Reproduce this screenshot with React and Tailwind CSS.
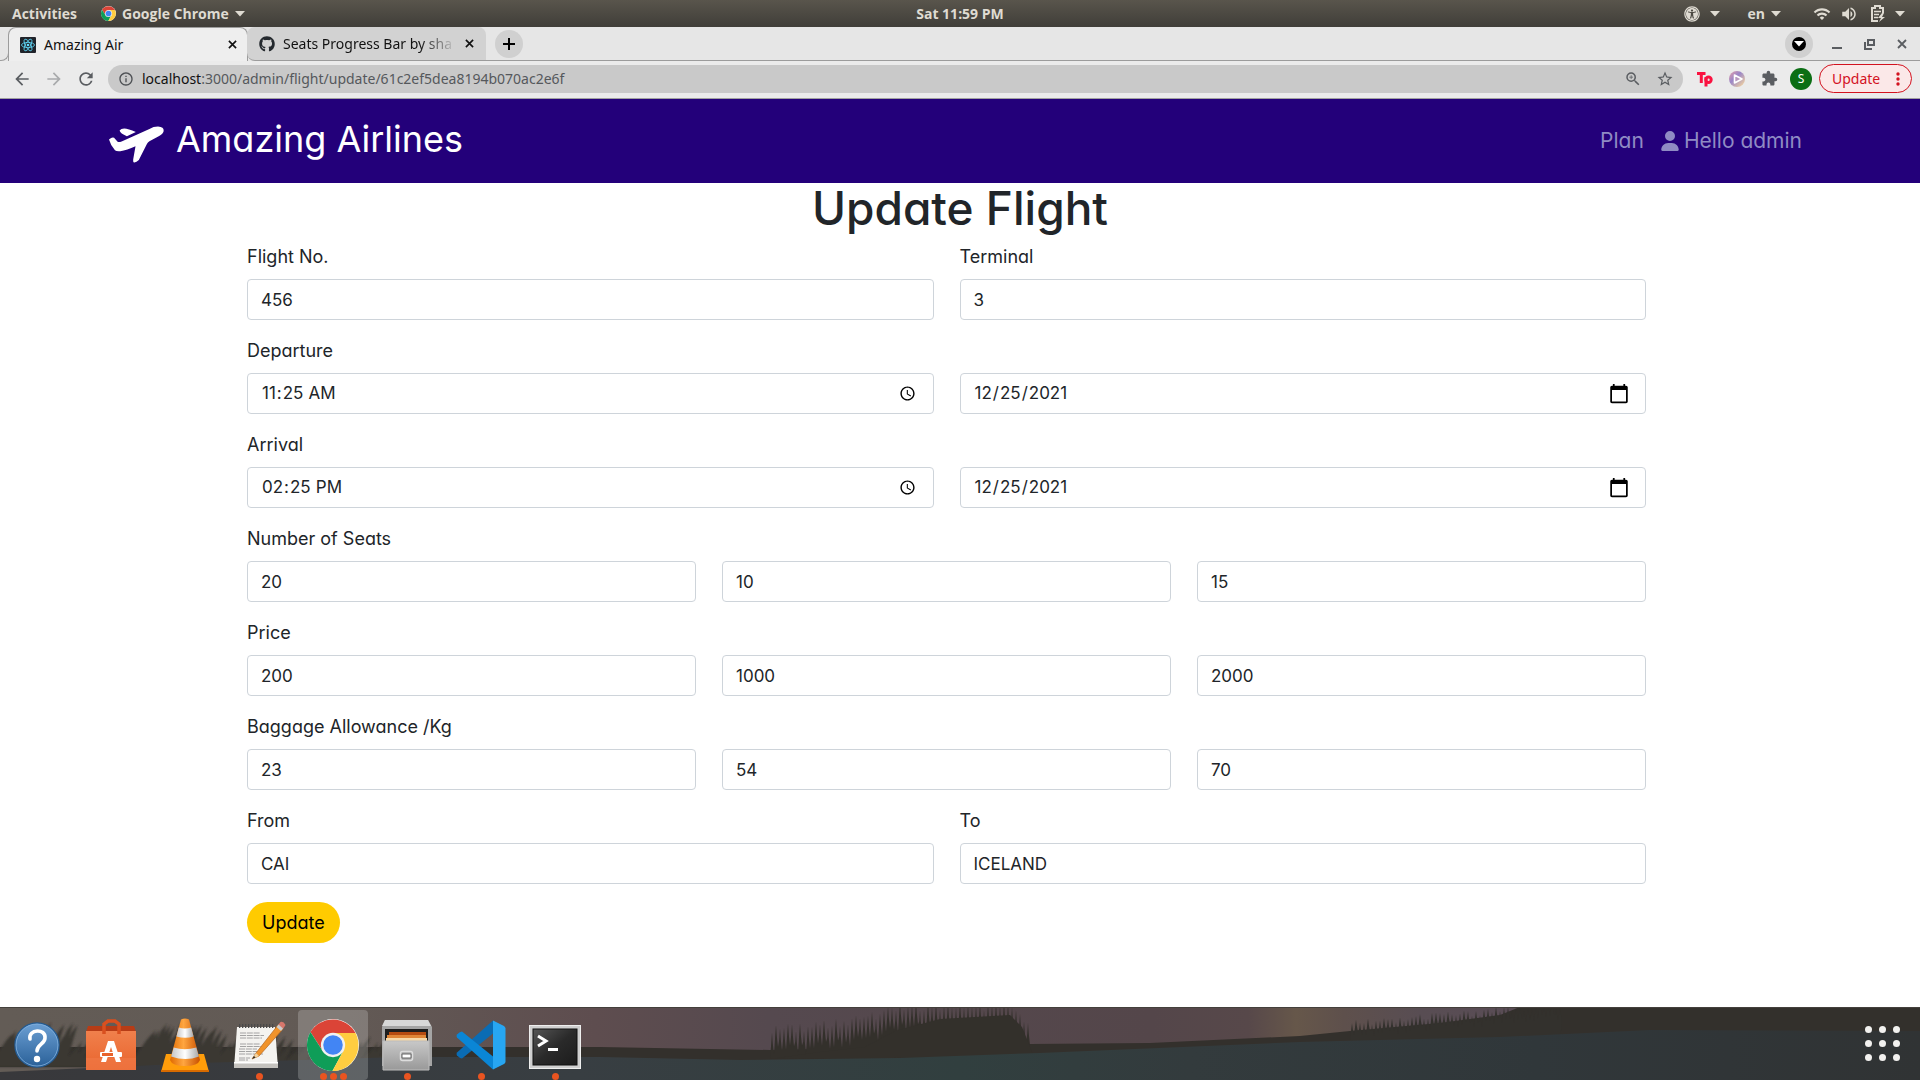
import React from "react";
import { FaGithub, FaUniversalAccess } from "react-icons/fa";
import { FaUser } from "react-icons/fa6";
import { MdArrowBack, MdArrowForward, MdRefresh, MdInfoOutline, MdZoomIn, MdStarBorder, MdWifi, MdVolumeUp, MdExtension } from "react-icons/md";

const Caret = ({ className = "" }) => (
  <svg viewBox="0 0 10 6" className={"h-[6px] w-[10px] " + className} fill="currentColor" aria-hidden="true">
    <path d="M0 0h10L5 5.5z" />
  </svg>
);

const Cross = ({ className }) => (
  <svg viewBox="0 0 10 10" className={className} stroke="currentColor" strokeWidth="1.800" aria-hidden="true">
    <path d="M1 1l8 8M9 1l-8 8" />
  </svg>
);

const ChromeLogo = ({ className }) => (
  <svg viewBox="0 0 48 48" className={className} aria-hidden="true">
    <circle cx="24" cy="24" r="24" fill="#fff" />
    <path fill="#db4437" d="M24 24V13H44.8A24 24 0 0 0 3.2 12L14.5 29.5z" />
    <path fill="#0f9d58" d="M3.2 12A24 24 0 0 0 23.5 48L33.5 29.5 24 24 14.5 29.5z" />
    <path fill="#ffcd40" d="M44.8 13A24 24 0 0 1 23.5 48L33.5 29.5 24 13z" />
    <circle cx="24" cy="24" r="11.2" fill="#f1f1f1" />
    <circle cx="24" cy="24" r="9" fill="#4285f4" />
  </svg>
);

const ReactLogo = () => (
  <svg viewBox="0 0 16 16" className="size-4" aria-hidden="true">
    <rect width="16" height="16" rx="1" fill="#20232a" />
    <g fill="none" stroke="#61dafb" strokeWidth="0.8">
      <ellipse cx="8" cy="8" rx="6.5" ry="2.6" />
      <ellipse cx="8" cy="8" rx="6.5" ry="2.6" transform="rotate(60 8 8)" />
      <ellipse cx="8" cy="8" rx="6.5" ry="2.6" transform="rotate(120 8 8)" />
    </g>
    <circle cx="8" cy="8" r="1.3" fill="#61dafb" />
  </svg>
);

const BatteryIcon = () => (
  <svg viewBox="0 0 16 18" className="h-[18px] w-4" fill="none" stroke="currentColor" strokeWidth="2" aria-hidden="true">
    <path d="M13 8V3H10V1H5v2H2v13h6" />
    <path d="M4 6.500h7M4 9.500h5M4 12.500h4" strokeWidth="1.500" />
    <path d="M12 8l-4 5h3l-2 4 6-5h-3l2-4z" fill="currentColor" stroke="none" />
  </svg>
);

const PlaneLogo = () => (
  <svg viewBox="26 32 166 110" className="mt-[6px] h-[37px] w-[55px]" fill="currentColor" aria-hidden="true">
    <path d="M30 69Q40 63 44 70L52 79Q56 81 64 78L148 40Q160 33 174 33Q192 34 191 46Q190 54 176 62L148 77Q143 80 140 86L116 134Q108 142 101 141Q98 139 99 132L106 92Q80 104 60 107Q48 108 44 104Q30 88 26 72Z" />
    <path d="M58 45Q62 39 72 39Q84 40 107 49L80 62Q60 54 58 45Z" />
  </svg>
);

function SystemBar() {
  return (
    <div className="grid h-[27px] shrink-0 grid-cols-3 items-center bg-linear-to-b from-[#59554c] to-[#403e39] font-['Open_Sans',sans-serif] text-[14px] font-bold text-[#dfdbd2]">
      <div className="flex items-center pl-3">
        <button className="w-[89px] text-left">Activities</button>
        <button className="flex items-center gap-[6px]">
          <ChromeLogo className="size-[15px]" />
          <span>Google Chrome</span>
          <Caret />
        </button>
      </div>
      <button className="justify-self-center">Sat 11:59 PM</button>
      <div className="flex items-center justify-end pr-[15px]">
        <button className="flex items-center gap-[10px]" aria-label="Accessibility"><FaUniversalAccess className="size-4" /><Caret /></button>
        <button className="ml-[28px] flex items-center gap-[6px]">en<Caret /></button>
        <button className="ml-[32px] flex items-center" aria-label="System menu">
          <MdWifi className="size-[18px]" />
          <MdVolumeUp className="ml-[9px] size-[18px]" />
          <span className="ml-[12px]"><BatteryIcon /></span>
          <Caret className="ml-[9px]" />
        </button>
      </div>
    </div>
  );
}

function TabStrip() {
  return (
    <div className="flex h-[34px] shrink-0 bg-[#e6e6e6] text-[14px] text-[#111]">
      <div className="-mr-px flex w-[9px] items-end"><div className="h-3 w-full rounded-br-lg border-r border-b border-[#9c9c9c]" /></div>
      <div className="flex w-[240px] items-center rounded-t-lg border border-b-0 border-[#9c9c9c] bg-[#eeeeee] pr-[10px] pl-[11px]">
        <ReactLogo />
        <span className="ml-2 flex-1 pb-px">Amazing Air</span>
        <button aria-label="Close tab"><Cross className="size-[9px]" /></button>
      </div>
      <div className="-ml-px flex w-[239px] items-center rounded-tl-lg rounded-tr-lg rounded-bl-lg border-b border-[#9c9c9c] bg-[#d2d2d2] pr-[12px] pl-[12px]">
        <FaGithub className="size-4 shrink-0 text-[#24292e]" />
        <span className="ml-2 bg-linear-to-r from-[#111] from-80% to-[#bbb] bg-clip-text pb-px whitespace-nowrap text-transparent">Seats Progress Bar by sha</span>
        <button className="ml-auto" aria-label="Close tab"><Cross className="size-[9px]" /></button>
      </div>
      <div className="flex flex-1 items-center justify-between border-b border-[#9c9c9c] pr-[11px] pl-[9px]">
        <button className="flex size-7 items-center justify-center rounded-full bg-[#d0d0d0]" aria-label="New tab">
          <svg viewBox="0 0 12 12" className="size-3" stroke="#000" strokeWidth="2" aria-hidden="true"><path d="M6 0v12M0 6h12" /></svg>
        </button>
        <div className="flex items-center text-[#5a5d61]">
          <button className="mr-[16px] flex size-7 items-center justify-center rounded-full bg-[#d0d0d0]" aria-label="Search tabs">
            <span className="flex size-[14px] items-center justify-center rounded-full bg-black"><Caret className="h-1 w-[6px] text-white" /></span>
          </button>
          <button className="flex h-4 w-4 items-end pb-[3px]" aria-label="Minimize"><span className="mx-auto h-[2px] w-[10px] bg-current" /></button>
          <button className="ml-4" aria-label="Restore">
            <svg viewBox="0 0 16 16" className="size-4" fill="none" stroke="currentColor" strokeWidth="2" aria-hidden="true"><path d="M7 4h6v5H7zM4 6v7h7" /></svg>
          </button>
          <button className="mr-[2px] ml-5" aria-label="Close"><Cross className="size-[10px]" /></button>
        </div>
      </div>
    </div>
  );
}

const slot = "flex w-8 shrink-0 items-center justify-center text-[#5a5d61]";

function AddressBar() {
  return (
    <div className="flex h-[38px] shrink-0 items-center border-b border-[#a0a0a0] bg-[#ebebeb] pr-2 pl-[6px] pb-[2px] text-[14px]">
      <button className={slot} aria-label="Back"><MdArrowBack className="size-5" /></button>
      <button className={slot + " opacity-45"} aria-label="Forward"><MdArrowForward className="size-5" /></button>
      <button className={slot} aria-label="Reload"><MdRefresh className="size-5" /></button>
      <div className="ml-[6px] flex h-7 flex-1 items-center rounded-full bg-[#c9c9c9] pl-[10px]">
        <MdInfoOutline className="size-4 text-[#4d5054]" />
        <div className="ml-2 flex-1 text-[#55585c]"><span className="text-[#111]">localhost</span>:3000/admin/flight/update/61c2ef5dea8194b070ac2e6f</div>
        <button className={slot} aria-label="Zoom"><MdZoomIn className="size-[18px]" /></button>
        <button className={slot} aria-label="Bookmark"><MdStarBorder className="size-[18px]" /></button>
        <span className="w-[2px]" />
      </div>
      <button className={slot + " ml-[6px]"} aria-label="Extension">
        <svg viewBox="0 0 16 16" className="size-4" fill="none" stroke="#fa1240" strokeWidth="3" aria-hidden="true"><path d="M0 2.500h8.500M4.300 2v10M9 15.500V6" /><circle cx="11.500" cy="8.800" r="2.700" /></svg>
      </button>
      <button className={slot} aria-label="Media extension">
        <svg viewBox="0 0 16 16" className="size-4" aria-hidden="true">
          <defs><linearGradient id="media" x1="0" y1="0" x2="1" y2="1"><stop stopColor="#e8a0a8" /><stop offset=".4" stopColor="#9a86c8" /><stop offset="1" stopColor="#ffdf9a" /></linearGradient></defs>
          <circle cx="8" cy="8" r="8" fill="url(#media)" /><path d="M5.500 4v8L13 8z" fill="#b89ac0" stroke="#fff" strokeWidth="1.600" strokeLinejoin="round" />
        </svg>
      </button>
      <button className={slot} aria-label="Extensions"><MdExtension className="size-[17px]" /></button>
      <button className={slot} aria-label="Profile"><span className="flex size-[22px] items-center justify-center rounded-full bg-[#0b6e14] text-[12px] text-white">S</span></button>
      <button className="ml-[2px] flex h-[29px] w-[93px] items-center justify-between rounded-full border border-[#d3121f] bg-[#fbe8e8] pr-[11px] pl-[12px] text-[#d3121f]">
        Update
        <svg viewBox="0 0 4 14" className="h-[14px] w-1" fill="currentColor" aria-hidden="true"><circle cx="2" cy="2" r="1.700" /><circle cx="2" cy="7" r="1.700" /><circle cx="2" cy="12" r="1.700" /></svg>
      </button>
    </div>
  );
}

const siteFont = "font-['Inter',sans-serif] [font-feature-settings:'cv11']";

function Header() {
  return (
    <header className={"flex h-[84px] shrink-0 items-center justify-between bg-[#23007a] pr-[118px] pl-[109px] " + siteFont}>
      <a href="#home" className="flex items-center gap-3 text-[36px] leading-[44px] text-white">
        <PlaneLogo />
        <span className="pb-1">Amazing Airlines</span>
      </a>
      <nav className="flex items-center gap-[17px] text-[21px] text-[#8f8bc4]">
        <a href="#plan">Plan</a>
        <a href="#profile" className="flex items-center gap-[5px]"><FaUser className="h-5 w-[18px]" />Hello admin</a>
      </nav>
    </header>
  );
}

const inputClass =
  "block h-[41px] w-full min-w-0 rounded-[4px] border border-[#ced4da] bg-white px-[13px] text-[17px] text-[#212529] [&[type=date]::-webkit-calendar-picker-indicator]:size-[22px]";

const rows = [
  [{ id: "flight", label: "Flight No.", value: "456" }, { id: "terminal", label: "Terminal", value: "3" }],
  [{ id: "departure-time", label: "Departure", value: "11:25", type: "time" }, { id: "departure-date", name: "Departure date", value: "2021-12-25", type: "date" }],
  [{ id: "arrival-time", label: "Arrival", value: "14:25", type: "time" }, { id: "arrival-date", name: "Arrival date", value: "2021-12-25", type: "date" }],
  [{ id: "seats-1", label: "Number of Seats", value: "20" }, { id: "seats-2", name: "Seats, second class", value: "10" }, { id: "seats-3", name: "Seats, third class", value: "15" }],
  [{ id: "price-1", label: "Price", value: "200" }, { id: "price-2", name: "Price, second class", value: "1000" }, { id: "price-3", name: "Price, third class", value: "2000" }],
  [{ id: "bag-1", label: "Baggage Allowance /Kg", value: "23" }, { id: "bag-2", name: "Baggage, second class", value: "54" }, { id: "bag-3", name: "Baggage, third class", value: "70" }],
  [{ id: "from", label: "From", value: "CAI" }, { id: "to", label: "To", value: "ICELAND" }],
];

function FlightForm() {
  return (
    <main className={"min-h-0 flex-1 overflow-hidden bg-white text-[18px] text-[#212529] " + siteFont}>
      <h1 className="text-center text-[46px] leading-[50px] font-medium">Update Flight</h1>
      <form className="mx-auto max-w-[1452px] pt-[11px] pr-[40px] pl-[13px]">
        {rows.map((fields) => (
          <div key={fields[0].id} className={"mb-[18px] grid items-end gap-x-[26px] " + (fields.length === 2 ? "grid-cols-2" : "grid-cols-3")}>
            {fields.map((f) => (
              <div key={f.id}>
                {f.label && <label htmlFor={f.id} className="mb-[9px] block leading-[26px]">{f.label}</label>}
                <input id={f.id} type={f.type || "text"} aria-label={f.name} defaultValue={f.value} className={inputClass} />
              </div>
            ))}
          </div>
        ))}
        <button type="button" className="h-[41px] rounded-full bg-[#ffcb00] px-[15px] text-black">Update</button>
      </form>
    </main>
  );
}

const noise = (n) => {
  const v = Math.sin(n * 12.9898) * 43758.5453;
  return v - Math.floor(v);
};

const spikes = (from, to, step, depth, jitter, top, base) => {
  let d = `M${from} ${base}`;
  for (let x = from; x < to; x += step) {
    const y = top(x) + noise(x) * jitter;
    d += `L${x + step * 0.3} ${y + depth * 0.5}L${x + step / 2} ${y}L${x + step * 0.7} ${y + depth * 0.5}L${x + step} ${y + depth}`;
  }
  return d + `L${to} ${base}Z`;
};

const blades = (from, to, count, top, base) => {
  let d = "";
  for (let i = 0; i < count; i++) {
    const x = from + ((to - from) * i) / count;
    const y = top(x) + noise(i + 3) * 14;
    d += `M${x - 12} ${base}L${x + 6} ${y + 2}L${x + 12} ${y - 5}L${x + 8} ${y + 8}L${x} ${base}Z`;
  }
  return d;
};

const forestEdge = (x) => (x < 850 ? 18 - (x - 770) * 0.1 : x < 885 ? 8 - (x - 850) * 0.2 : x < 1010 ? -5 : (x - 1010) * 0.8 - 2);
const forest = spikes(770, 1030, 4, 22, 9, forestEdge, 52);
const forestMass = "M770 52 820 45 865 40 895 24 940 12 1010 8 1022 20 1030 40 1034 50Z";
const hill = spikes(1350, 1560, 4, 12, 7, (x) => 13 - (x - 1350) * 0.09, 34);
const reeds = blades(0, 70, 16, (x) => 24 - x * 0.15, 60) + blades(140, 185, 12, (x) => 24 - (x - 140) * 0.3, 60) + blades(185, 235, 10, (x) => 16 + (x - 185) * 0.3, 60) + blades(70, 140, 8, () => 32, 60) + blades(235, 420, 24, () => 30, 60);

function Landscape() {
  return (
    <svg viewBox="0 0 1920 73" preserveAspectRatio="none" className="absolute inset-0 h-full w-full" aria-hidden="true">
      <defs>
        <linearGradient id="sky">
          <stop stopColor="#635c56" /><stop offset=".18" stopColor="#625a55" /><stop offset=".31" stopColor="#5e4d4f" /><stop offset=".4" stopColor="#55494f" />
          <stop offset=".6" stopColor="#54464a" /><stop offset=".65" stopColor="#57484a" /><stop offset=".675" stopColor="#66574a" /><stop offset=".7" stopColor="#5e504c" /><stop offset=".74" stopColor="#584d53" /><stop offset=".8" stopColor="#5a4c56" /><stop offset="1" stopColor="#33312d" />
        </linearGradient>
        <linearGradient id="water">
          <stop stopColor="#38383b" /><stop offset=".3" stopColor="#383e42" /><stop offset=".5" stopColor="#313f3f" /><stop offset=".62" stopColor="#333b3d" /><stop offset=".8" stopColor="#30373a" /><stop offset="1" stopColor="#303334" />
        </linearGradient>
        <filter id="soft"><feGaussianBlur stdDeviation="1" /></filter>
      </defs>
      <rect width="1920" height="73" fill="url(#sky)" />
      <path d="M0 40H400L600 40 770 43 1030 37 1150 36 1300 29 1350 24 1440 16 1500 8 1520 0H1920V60H0Z" fill="#33302c" />
      <path d={reeds} fill="#3a3733" filter="url(#soft)" />
      <path d={forest} fill="#33302b" />
      <path d={forestMass} fill="#33302b" />
      <path d={hill} fill="#33312d" />
      <path d="M0 65 200 56 400 50 600 50 740 53 900 51 1040 46 1300 35 1500 30 1650 23 1920 24V73H0Z" fill="url(#water)" />
      <path d="M0 .5H1920" stroke="#44403c" />
    </svg>
  );
}

const HelpIcon = () => (
  <svg viewBox="0 0 52 52" className="size-[52px]" aria-hidden="true">
    <defs><linearGradient id="help" x2="0" y2="1"><stop stopColor="#6ca0d4" /><stop offset="1" stopColor="#2a6098" /></linearGradient></defs>
    <circle cx="26" cy="26" r="22" fill="url(#help)" stroke="#245a90" strokeWidth="1.500" />
    <circle cx="26" cy="26" r="21" fill="none" stroke="#86b4e0" strokeWidth=".8" />
    <path d="M19 20c-2-10 16-11 15-1 0 6-8 6.500-8 13" fill="none" stroke="#fff" strokeWidth="3.600" strokeLinecap="round" /><circle cx="26" cy="40" r="3.200" fill="#fff" />
  </svg>
);

const SoftwareIcon = () => (
  <svg viewBox="0 0 52 52" className="size-[52px]" aria-hidden="true">
    <defs><linearGradient id="bag" x2="0" y2="1"><stop stopColor="#f0804c" /><stop offset="1" stopColor="#e9642d" /></linearGradient></defs>
    <path d="M3 7h46l2 6H1z" fill="#b73c16" />
    <path d="M1 12h50v39H1z" fill="url(#bag)" />
    <path d="M1 39h50v12H1z" fill="#f07a47" opacity=".6" />
    <path d="M19 15V5l4-3h7l4 3v10" fill="none" stroke="#d9501f" strokeWidth="3.500" />
    <path d="M23 22h6l7 21h-5l-5-15-5 15h-5z" fill="#fff" />
    <rect x="15" y="33" width="22" height="5" rx="1" fill="#fff" /><rect x="17" y="34" width="11" height="3" fill="#e8622b" />
  </svg>
);

const ConeIcon = () => (
  <svg viewBox="0 0 52 54" className="h-[54px] w-[52px]" aria-hidden="true">
    <defs><linearGradient id="cone"><stop stopColor="#e06a00" /><stop offset=".45" stopColor="#ffa640" /><stop offset="1" stopColor="#c85000" /></linearGradient>
      <linearGradient id="stripe"><stop stopColor="#c4c4c4" /><stop offset=".5" stopColor="#fff" /><stop offset="1" stopColor="#a8a8a8" /></linearGradient></defs>
    <path d="M7 36h38l5 18H2z" fill="#ff9d0a" /><path d="M2 52h48v2H2z" fill="#d96b00" />
    <path d="M22 1.500q4-2 8 0L41 42q-2 6-15 6t-15-6z" fill="url(#cone)" />
    <path d="M19.800 9.500q6 2 12.400 0l2.400 9q-8 2.500-17.200 0z" fill="url(#stripe)" />
    <path d="M14.700 29.500q11 3.500 22.600 0l2.600 9q-13 5-27.800 0z" fill="url(#stripe)" />
  </svg>
);

const NotesIcon = () => (
  <svg viewBox="0 0 54 52" className="h-[52px] w-[54px]" aria-hidden="true">
    <path d="M5 8h38l3 41H2z" fill="#f4f3f0" /><path d="M2 43h44v6H2z" fill="#c4c2be" /><path d="M2 43h44v1.500H2z" fill="#fff" />
    <path d="M7 7h36" stroke="#4a4a4a" strokeWidth="4" strokeDasharray="1.300 1.700" />
    <path d="M8 14h20M8 16.500h24M8 19h22M8 25h20M8 27.500h22M7 30h18M7 32.500h22M7 35h24M7 39h11M7 41h9" stroke="#9a9a9a" strokeWidth=".9" strokeDasharray="6 .8" />
    <path d="M20 40l4-6L46 6l5 4-24 27z" fill="#f0932b" stroke="#b5651d" strokeWidth=".7" /><path d="M20 40l4-6 3 3z" fill="#f2d3a0" /><path d="M20 40l2-3 1.500 1.500z" fill="#222" />
    <path d="M46 6l2.500-3q3-1 5 3L51 10z" fill="#d6776c" /><path d="M44.500 8l2-2.500 4.500 4-2 2.500z" fill="#ccc" />
  </svg>
);

const FilesIcon = () => (
  <svg viewBox="0 0 52 52" className="size-[52px]" aria-hidden="true">
    <defs><linearGradient id="cab" x2="0" y2="1"><stop stopColor="#c8c8c8" /><stop offset="1" stopColor="#999" /></linearGradient></defs>
    <path d="M4 1h43l4 7v39H1V8z" fill="#a5a5a5" /><path d="M4 1h43l3 6H1z" fill="#d8d8d8" />
    <path d="M4 10h43v14H4z" fill="#1d1d1d" />
    <path d="M8 13h37v3H8z" fill="#b54b10" /><path d="M6 16h39v4H6z" fill="#df8637" /><path d="M5 19h41v5H5z" fill="#f6d8a8" />
    <path d="M2 22h46v29H2z" fill="url(#cab)" stroke="#bcbcbc" />
    <rect x="19.500" y="32.500" width="12" height="9" rx="2" fill="#a9a9a9" stroke="#ddd" strokeWidth="1.500" /><path d="M21 35h9v4h-9z" fill="#fff" stroke="#666" />
  </svg>
);

const CodeIcon = () => (
  <svg viewBox="0 0 50 50" className="size-[50px]" aria-hidden="true">
    <path d="M1 32.500 37 0.500v13L6 38.500q-2 0-5-3-1-1.500 0-3z" fill="#0a6cb4" />
    <path d="M1 17.500 37 49.500v-13L6 11.500q-2 0-5 3-1 1.500 0 3z" fill="#0a86d6" />
    <path d="M37 .5 48 6q1.500 1 1.500 2.500v33Q49.500 43 48 44L37 49.500z" fill="#27a6f2" />
  </svg>
);

const TerminalIcon = () => (
  <svg viewBox="0 0 52 44" className="mt-1 h-11 w-[52px]" aria-hidden="true">
    <defs><linearGradient id="term" x2="1" y2="1"><stop stopColor="#555" /><stop offset=".5" stopColor="#2a2a2a" /><stop offset="1" stopColor="#1c1c1c" /></linearGradient></defs>
    <rect width="52" height="44" rx="1" fill="#cfcfcf" /><rect x=".5" y=".5" width="51" height="43" fill="none" stroke="#eee" />
    <rect x="4" y="4" width="44" height="36" fill="url(#term)" stroke="#111" />
    <path d="M9 11l8 5-8 5" fill="none" stroke="#fff" strokeWidth="3" /><path d="M19 24.500h10" stroke="#fff" strokeWidth="3" />
  </svg>
);

const apps = [
  { name: "Help", icon: <HelpIcon />, dots: 0 },
  { name: "Software", icon: <SoftwareIcon />, dots: 0 },
  { name: "VLC", icon: <ConeIcon />, dots: 0 },
  { name: "Notes", icon: <NotesIcon />, dots: 1 },
  { name: "Chrome", icon: <ChromeLogo className="size-[52px]" />, dots: 3 },
  { name: "Files", icon: <FilesIcon />, dots: 1 },
  { name: "Code", icon: <CodeIcon />, dots: 1 },
  { name: "Terminal", icon: <TerminalIcon />, dots: 1 },
];

function Dock() {
  return (
    <footer className="relative flex h-[73px] shrink-0 items-center justify-between">
      <Landscape />
      <div className="relative flex">
        {apps.map((app) => (
          <button
            key={app.name}
            aria-label={app.name}
            className={"relative mx-[2px] mt-[2px] flex h-[70px] w-[70px] items-center justify-center rounded " + (app.dots === 3 ? "bg-white/20" : "")}
          >
            {app.icon}
            <span className="absolute bottom-0 flex gap-[3px]">
              {Array.from({ length: app.dots }, (_, i) => <span key={i} className="size-[7px] rounded-full bg-[#e95420]" />)}
            </span>
          </button>
        ))}
      </div>
      <button className="relative mr-5 grid grid-cols-3 gap-[7px]" aria-label="Show applications">
        {Array.from({ length: 9 }, (_, i) => <span key={i} className="size-[7px] rounded-full bg-[#f2f1ef]" />)}
      </button>
    </footer>
  );
}

export default function App() {
  return (
    <div className="flex h-screen flex-col overflow-hidden bg-white font-['Noto_Sans',sans-serif]">
      <SystemBar />
      <TabStrip />
      <AddressBar />
      <Header />
      <FlightForm />
      <Dock />
    </div>
  );
}
